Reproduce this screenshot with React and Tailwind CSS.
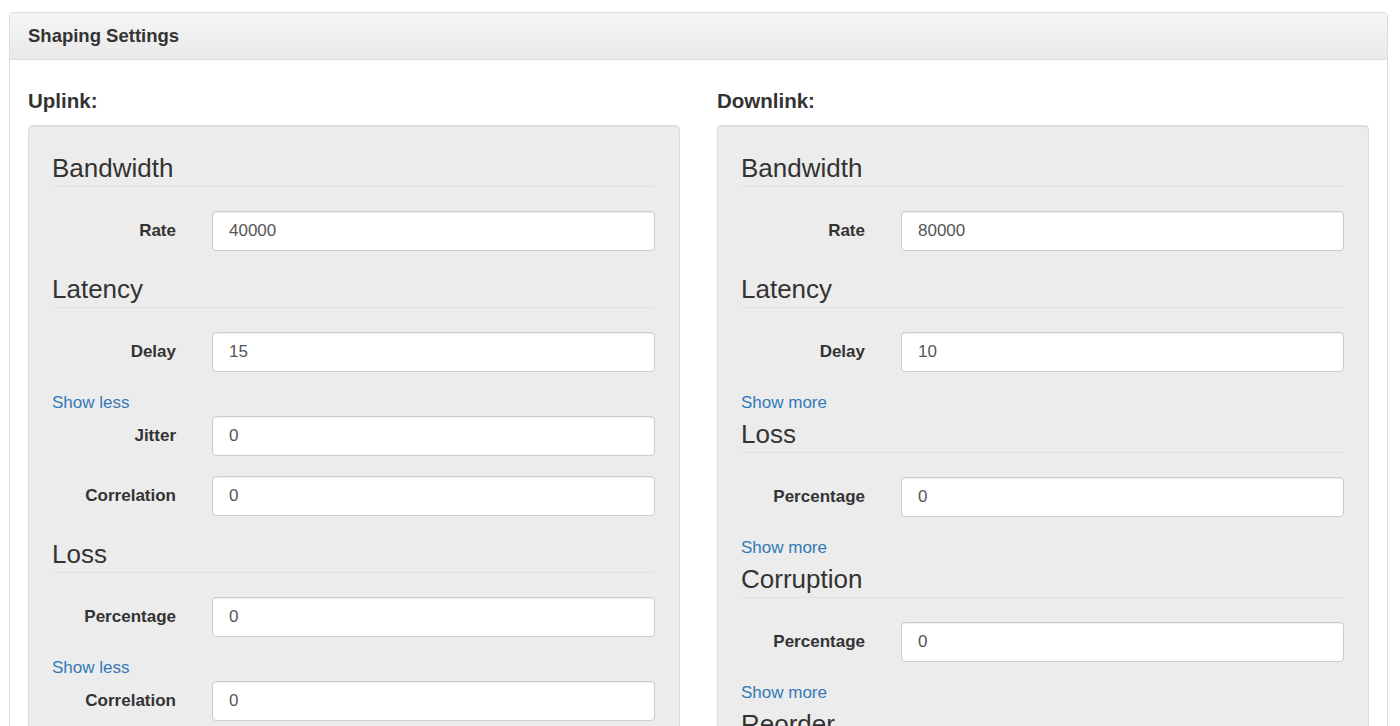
const FONT = { fontFamily: '"Liberation Sans", Arial, Helvetica, sans-serif' };

const uplink = [
  { title: "Bandwidth", fields: [{ label: "Rate", value: "40000" }] },
  {
    title: "Latency",
    fields: [{ label: "Delay", value: "15" }],
    toggle: "Show less",
    extra: [
      { label: "Jitter", value: "0" },
      { label: "Correlation", value: "0" },
    ],
  },
  {
    title: "Loss",
    fields: [{ label: "Percentage", value: "0" }],
    toggle: "Show less",
    extra: [{ label: "Correlation", value: "0" }],
  },
  { title: "Corruption", fields: [{ label: "Percentage", value: "0" }], toggle: "Show more" },
];

const downlink = [
  { title: "Bandwidth", fields: [{ label: "Rate", value: "80000" }] },
  { title: "Latency", fields: [{ label: "Delay", value: "10" }], toggle: "Show more" },
  { title: "Loss", fields: [{ label: "Percentage", value: "0" }], toggle: "Show more" },
  { title: "Corruption", fields: [{ label: "Percentage", value: "0" }], toggle: "Show more" },
  { title: "Reorder", fields: [{ label: "Percentage", value: "0" }], toggle: "Show more" },
];

function Field({ label, value }) {
  return (
    <div className="mb-5 grid grid-cols-[124px_1fr] items-center gap-x-9">
      <label className="text-right text-[17px] font-bold text-[#333]">{label}</label>
      <input
        readOnly
        value={value}
        className="h-10 w-full rounded-[4px] border border-[#cccccc] bg-white px-4 text-[17px] text-[#555] shadow-[inset_0_1px_1px_rgba(0,0,0,0.075)] outline-none"
        style={FONT}
      />
    </div>
  );
}

function Section({ title, fields, toggle, extra }) {
  return (
    <div>
      <h3 className="mb-6 h-[37px] border-b border-[#e1e1e1] text-[26px] leading-[36px] font-normal text-[#333]">
        {title}
      </h3>
      {fields.map((f) => (
        <Field key={f.label} {...f} />
      ))}
      {toggle && (
        <a className="mb-[2px] block text-[17px] leading-[22px] text-[#3379b9]" href="#">
          {toggle}
        </a>
      )}
      {extra && extra.map((f) => <Field key={f.label} {...f} />)}
    </div>
  );
}

function Direction({ name, sections }) {
  return (
    <div>
      <h4 className="mb-3 text-[20.5px] leading-6 font-bold text-[#333]">{name}</h4>
      <div className="rounded-[4px] border border-[#dcdcdc] bg-[#ececec] pt-6 pr-6 pb-6 pl-[23px] shadow-[inset_0_1px_1px_rgba(0,0,0,0.05)]">
        {sections.map((s) => (
          <Section key={s.title} {...s} />
        ))}
      </div>
    </div>
  );
}

export default function App() {
  return (
    <div className="min-h-screen bg-white pt-3 pr-3 pl-[9px]" style={FONT}>
      <div className="rounded-[4px] border border-[#dddddd] bg-white">
        <div className="flex h-[47px] items-center rounded-t-[4px] border-b border-[#dddddd] bg-gradient-to-b from-[#f6f6f6] to-[#e9e9e9] px-[18px]">
          <h2 className="text-[18.5px] font-bold text-[#333]">Shaping Settings</h2>
        </div>
        <div className="grid grid-cols-2 gap-x-[37px] px-[18px] pt-[29px] pb-6">
          <Direction name="Uplink:" sections={uplink} />
          <Direction name="Downlink:" sections={downlink} />
        </div>
      </div>
    </div>
  );
}
